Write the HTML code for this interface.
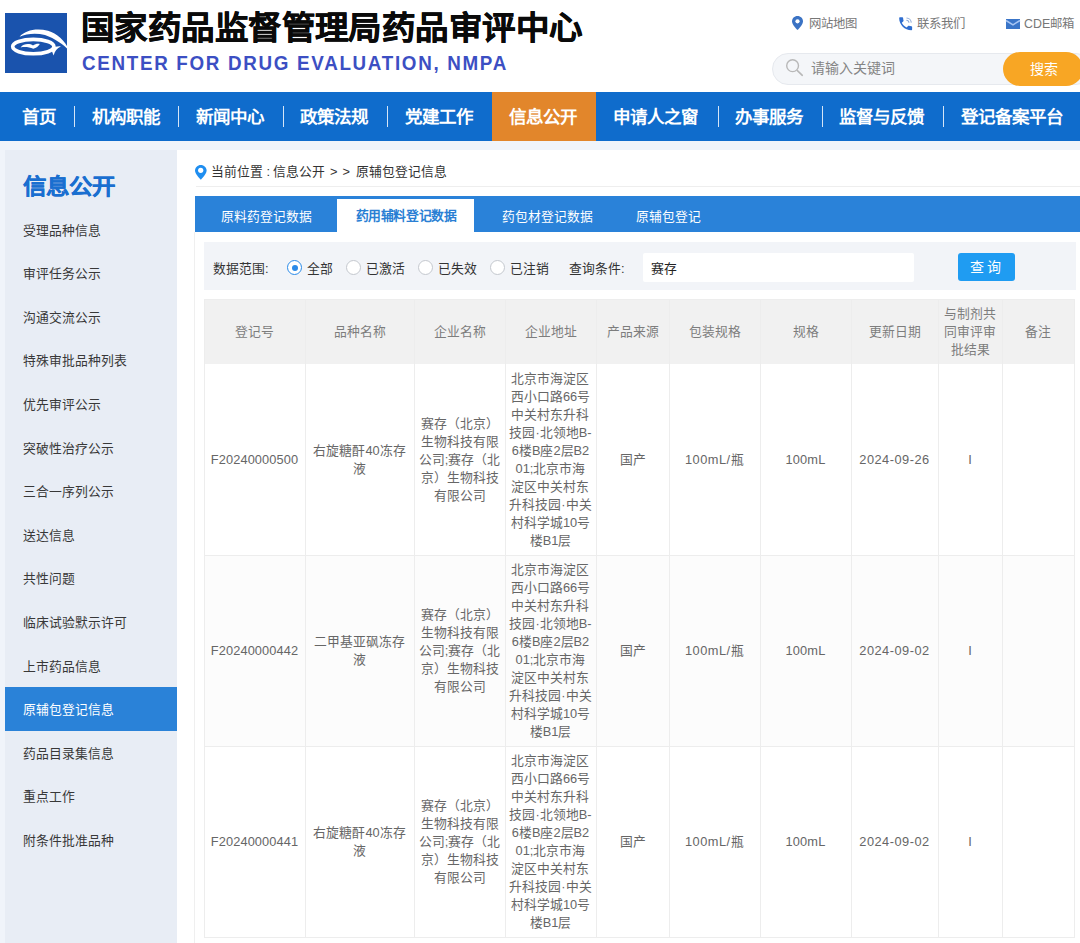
<!DOCTYPE html>
<html lang="zh-CN">
<head>
<meta charset="utf-8">
<style>
*{margin:0;padding:0;box-sizing:border-box}
html,body{width:1080px;height:943px;overflow:hidden}
body{font-family:"Liberation Sans",sans-serif;background:#f0f4fa;position:relative;color:#333}
#hdr{position:absolute;left:0;top:0;width:1080px;height:92px;background:#fff}
#logo{position:absolute;left:5px;top:13px;width:61.5px;height:60px;background:#1a53ad}
#cn{position:absolute;left:81px;top:5px;font-size:33.5px;letter-spacing:0.43px;font-weight:bold;color:#0a0a0a;-webkit-text-stroke:0.6px #0a0a0a;transform:scaleY(0.955);transform-origin:0 37px;line-height:46px;white-space:nowrap}
#en{position:absolute;left:81.5px;top:52px;font-size:20px;color:#3c4fc3;line-height:22px;letter-spacing:1.8px;transform:scaleX(0.94);transform-origin:0 0;font-weight:bold;white-space:nowrap}
.tl{position:absolute;top:14.5px;font-size:12.4px;color:#777;line-height:18px;white-space:nowrap}
#search{position:absolute;left:772px;top:53px;width:320px;height:32px;border-radius:16px;background:#f4f6f9;border:1px solid #e6e9ee}
#sbtn{position:absolute;left:1003px;top:52px;width:80px;height:34px;border-radius:17px;background:#f8a624;color:#fff;font-size:14px;line-height:34px;padding-left:27px}
#ph{position:absolute;left:811px;top:59px;font-size:14px;color:#858585;line-height:18px;white-space:nowrap}
#nav{position:absolute;left:0;top:92px;width:1080px;height:49px;background:#0f6ccc}
.ni{position:absolute;top:1px;height:49px;line-height:49px;font-size:17.5px;font-weight:bold;color:#fff;white-space:nowrap}
.sep{position:absolute;top:14px;width:1px;height:21px;background:#d5e5f7}
#side{position:absolute;left:5px;top:150px;width:172px;height:793px;background:#e8edf5}
#stitle{position:absolute;left:18px;top:19.5px;font-size:23.5px;font-weight:bold;color:#1a6fd0;line-height:32px;white-space:nowrap;-webkit-text-stroke:0.3px #1a6fd0;transform:scaleY(0.93);transform-origin:0 26px}
.si{position:absolute;left:0;width:172px;height:43.6px;line-height:45.6px;padding-left:18px;font-size:12.8px;color:#383838;white-space:nowrap}
.si.act{background:#2a82d8;color:#fff}
#main{position:absolute;left:177px;top:150px;width:903px;height:793px;background:#fff}
.m{position:absolute;white-space:nowrap}
.ic{position:absolute;overflow:visible}
.crumb{top:163px;font-size:12.8px;line-height:18px;color:#333}
#cline{left:196px;top:186px;width:884px;height:1px;background:#eeeeee}
#tabs{left:195px;top:196px;width:885px;height:36px;background:#2a82d9}
#tact{left:337px;top:199px;width:137px;height:33px;background:#fff}
.tab{top:206.5px;font-size:12.8px;line-height:20px;color:#fff}
#tabbox{left:194px;top:232px;width:1px;height:711px;background:#efefef}
#filter{left:204px;top:242px;width:872px;height:48px;background:#f2f4f8}
.ft{top:259px;font-size:12.8px;line-height:20px;color:#333}
.rad{top:260px;width:15px;height:15px;border-radius:50%;border:1px solid #c4c8ce;background:#fff}
.rad.on{border-color:#2a8ae8}
.rad.on:after{content:"";position:absolute;left:3.5px;top:3.5px;width:6px;height:6px;border-radius:50%;background:#2a8ae8}
#inp{left:643px;top:253px;width:271px;height:29px;background:#fff;border-radius:2px}
#qbtn{left:958px;top:253px;width:57px;height:28px;background:#1f9cf2;border-radius:3px;color:#fff;font-size:14px;line-height:28px;text-align:center;letter-spacing:3px;padding-left:0px}
.tb{position:absolute}
.vl{position:absolute;width:1px;background:#ededed}
.hl{position:absolute;height:1px;background:#ededed}
.cell{position:absolute;display:flex;align-items:center;justify-content:center;text-align:center;font-size:12.8px;line-height:18px}
.th{color:#7d7d7d}
.td{color:#666}
</style>
</head>
<body>
<div id="hdr">
  <div id="logo"><svg width="62" height="60" viewBox="0 0 62 60" style="position:absolute;left:0;top:0;overflow:visible">
<path d="M14.6,23.7 C20,17.5 31,14.8 43,17.8 C52,20.5 59.5,27 64.8,38.2 C58.5,31.5 50,25.5 40,22 C31,19.6 21.5,20.6 14.6,23.7 Z" fill="#fff"/>
<ellipse cx="28.3" cy="33.6" rx="20.6" ry="7.2" fill="none" stroke="#fff" stroke-width="3.6"/>
<path d="M45.5,36 C49,33.8 52.5,33.2 55.8,33.4 C52,35 49.8,37.8 48.6,42.6 C47.8,40 46.8,37.8 45.5,36 Z" fill="#fff"/>
<path d="M15.6,34.4 C18.5,30.4 24.5,30.2 28,32.4 C30,31 32.6,30.4 34.8,30.9 C33.6,33 31.2,34.9 28.3,35.8 C24.5,34 19.5,33.6 15.6,34.4 Z" fill="#fff"/>
</svg></div>
  <div id="cn">国家药品监督管理局药品审评中心</div>
  <div id="en">CENTER FOR DRUG EVALUATION, NMPA</div>
  <div class="tl" style="left:809px">网站地图</div>
  <div class="tl" style="left:917px">联系我们</div>
  <div class="tl" style="left:1024px">CDE邮箱</div>
  <div id="search"></div>
  <svg class="ic" style="left:792px;top:16px" width="11" height="14" viewBox="0 0 11 14"><path d="M5.5,0 C2.4,0 0,2.4 0,5.4 C0,8.8 5.5,14 5.5,14 C5.5,14 11,8.8 11,5.4 C11,2.4 8.6,0 5.5,0 Z" fill="#3b73c4"/><circle cx="5.5" cy="5.3" r="2.1" fill="#fff"/></svg>
  <svg class="ic" style="left:897px;top:14.5px" width="17.3" height="17.3" viewBox="0 0 24 24"><path d="M6.62 10.79c1.44 2.830 3.76 5.140 6.59 6.590l2.2-2.2c.27-.27.67-.36 1.02-.24 1.12.37 2.330.57 3.570.57.55 0 1 .45 1 1V20c0 .55-.45 1-1 1-9.39 0-17-7.61-17-17 0-.55.45-1 1-1h3.5c.55 0 1 .45 1 1 0 1.25.2 2.450.57 3.570.11.35.03.74-.25 1.020l-2.2 2.2z" fill="#2f6ed0"/><path d="M13.2,4.2 A6.8,6.8 0 0 1 19.8,10.6" fill="none" stroke="#8eaad8" stroke-width="1.5"/><path d="M13,7.4 A3.6,3.6 0 0 1 16.6,10.8" fill="none" stroke="#8eaad8" stroke-width="1.5"/></svg>
  <svg class="ic" style="left:1006px;top:19px" width="14" height="10" viewBox="0 0 14 10"><rect x="0" y="0" width="14" height="10" fill="#3a75c8"/><path d="M0,1.5 L7,5.8 L14,1.5" fill="none" stroke="#a8c6f4" stroke-width="1.5"/></svg>
  <svg class="ic" style="left:785px;top:58px" width="20" height="20" viewBox="0 0 20 20"><circle cx="7.6" cy="7.7" r="5.9" fill="none" stroke="#b8b8b8" stroke-width="1.4"/><path d="M12.4,12.6 L17.3,17.3" stroke="#b8b8b8" stroke-width="1.6" stroke-linecap="round"/></svg>
  <div id="ph">请输入关键词</div>
  <div id="sbtn">搜索</div>
</div>
<div id="nav">
  <div class="ni" style="left:22px">首页</div><div class="sep" style="left:74px"></div>
  <div class="ni" style="left:92px">机构职能</div><div class="sep" style="left:178px"></div>
  <div class="ni" style="left:196px">新闻中心</div><div class="sep" style="left:283px"></div>
  <div class="ni" style="left:300px">政策法规</div><div class="sep" style="left:387px"></div>
  <div class="ni" style="left:405px">党建工作</div>
  <div style="position:absolute;left:492px;top:0;width:104px;height:49px;background:#e2862b"></div>
  <div class="ni" style="left:509px">信息公开</div>
  <div class="ni" style="left:613px">申请人之窗</div><div class="sep" style="left:718px"></div>
  <div class="ni" style="left:735px">办事服务</div><div class="sep" style="left:822px"></div>
  <div class="ni" style="left:839px">监督与反馈</div><div class="sep" style="left:943px"></div>
  <div class="ni" style="left:961px">登记备案平台</div>
</div>
<div id="side">
  <div id="stitle">信息公开</div>
  <div class="si" style="top:57.5px">受理品种信息</div>
  <div class="si" style="top:101.1px">审评任务公示</div>
  <div class="si" style="top:144.7px">沟通交流公示</div>
  <div class="si" style="top:188.3px">特殊审批品种列表</div>
  <div class="si" style="top:231.9px">优先审评公示</div>
  <div class="si" style="top:275.5px">突破性治疗公示</div>
  <div class="si" style="top:319.1px">三合一序列公示</div>
  <div class="si" style="top:362.7px">送达信息</div>
  <div class="si" style="top:406.3px">共性问题</div>
  <div class="si" style="top:449.9px">临床试验默示许可</div>
  <div class="si" style="top:493.5px">上市药品信息</div>
  <div class="si act" style="top:537.1px">原辅包登记信息</div>
  <div class="si" style="top:580.7px">药品目录集信息</div>
  <div class="si" style="top:624.3px">重点工作</div>
  <div class="si" style="top:667.9px">附条件批准品种</div>
</div>
<div id="main"></div>
<svg class="ic" style="left:195px;top:165px" width="12" height="15" viewBox="0 0 12 15"><path d="M5.8,0 C2.6,0 0,2.5 0,5.6 C0,9.3 5.8,14.8 5.8,14.8 C5.8,14.8 11.6,9.3 11.6,5.6 C11.6,2.5 9,0 5.8,0 Z" fill="#1f8ef0"/><circle cx="5.7" cy="5.3" r="2.6" fill="#fff"/></svg>
<div class="m crumb" style="left:211px">当前位置 :</div><div class="m crumb" style="left:272.5px">信息公开</div><div class="m crumb" style="left:330px">&gt;</div><div class="m crumb" style="left:342.5px">&gt;</div><div class="m crumb" style="left:356px">原辅包登记信息</div>
<div class="m" id="cline"></div>
<div class="m" id="tabs"></div>
<div class="m" id="tact"></div>
<div class="m tab" style="left:221px">原料药登记数据</div>
<div class="m tab" style="left:355.5px;top:205.5px;font-size:12.8px;letter-spacing:-0.35px;color:#2a7fd4;font-weight:bold">药用辅料登记数据</div>
<div class="m tab" style="left:502px">药包材登记数据</div>
<div class="m tab" style="left:636px">原辅包登记</div>
<div class="m" id="tabbox"></div>
<div class="m" id="filter"></div>
<div class="m ft" style="left:213px">数据范围:</div>
<div class="m rad on" style="left:287px"></div><div class="m ft" style="left:307px">全部</div>
<div class="m rad" style="left:346px"></div><div class="m ft" style="left:366px">已激活</div>
<div class="m rad" style="left:418px"></div><div class="m ft" style="left:438px">已失效</div>
<div class="m rad" style="left:490px"></div><div class="m ft" style="left:510px">已注销</div>
<div class="m ft" style="left:569px">查询条件:</div>
<div class="m" id="inp"></div>
<div class="m ft" style="left:651px;color:#222">赛存</div>
<div class="m" id="qbtn">查询</div>
<div class="tb" style="left:204px;top:299px;width:870px;height:65px;background:#f1f1f1"></div>
<div class="tb" style="left:204px;top:364px;width:870px;height:191px;background:#ffffff"></div>
<div class="tb" style="left:204px;top:555px;width:870px;height:191px;background:#fcfcfc"></div>
<div class="tb" style="left:204px;top:746px;width:870px;height:191px;background:#ffffff"></div>
<div class="vl" style="left:204px;top:299px;height:639px"></div>
<div class="vl" style="left:305px;top:299px;height:639px"></div>
<div class="vl" style="left:414px;top:299px;height:639px"></div>
<div class="vl" style="left:505px;top:299px;height:639px"></div>
<div class="vl" style="left:596px;top:299px;height:639px"></div>
<div class="vl" style="left:669px;top:299px;height:639px"></div>
<div class="vl" style="left:760px;top:299px;height:639px"></div>
<div class="vl" style="left:851px;top:299px;height:639px"></div>
<div class="vl" style="left:938px;top:299px;height:639px"></div>
<div class="vl" style="left:1002px;top:299px;height:639px"></div>
<div class="vl" style="left:1074px;top:299px;height:639px"></div>
<div class="hl" style="left:204px;top:299px;width:871px"></div>
<div class="hl" style="left:204px;top:555px;width:871px"></div>
<div class="hl" style="left:204px;top:746px;width:871px"></div>
<div class="hl" style="left:204px;top:937px;width:871px"></div>
<div class="cell th" style="left:204px;top:299px;width:101px;height:65px"><span>登记号</span></div>
<div class="cell th" style="left:305px;top:299px;width:109px;height:65px"><span>品种名称</span></div>
<div class="cell th" style="left:414px;top:299px;width:91px;height:65px"><span>企业名称</span></div>
<div class="cell th" style="left:505px;top:299px;width:91px;height:65px"><span>企业地址</span></div>
<div class="cell th" style="left:596px;top:299px;width:73px;height:65px"><span>产品来源</span></div>
<div class="cell th" style="left:669px;top:299px;width:91px;height:65px"><span>包装规格</span></div>
<div class="cell th" style="left:760px;top:299px;width:91px;height:65px"><span>规格</span></div>
<div class="cell th" style="left:851px;top:299px;width:87px;height:65px"><span>更新日期</span></div>
<div class="cell th" style="left:938px;top:299px;width:64px;height:65px"><span>与制剂共<br>同审评审<br>批结果</span></div>
<div class="cell th" style="left:1002px;top:299px;width:72px;height:65px"><span>备注</span></div>
<div class="cell td" style="left:204px;top:364px;width:101px;height:191px;letter-spacing:0.1px"><span>F20240000500</span></div>
<div class="cell td" style="left:305px;top:364px;width:109px;height:191px;letter-spacing:0"><span>右旋糖酐40冻存<br>液</span></div>
<div class="cell td" style="left:414px;top:364px;width:91px;height:191px;letter-spacing:0"><span>赛存（北京）<br>生物科技有限<br>公司;赛存（北<br>京）生物科技<br>有限公司</span></div>
<div class="cell td" style="left:505px;top:364px;width:91px;height:191px;letter-spacing:0"><span>北京市海淀区<br>西小口路66号<br>中关村东升科<br>技园·北领地B-<br>6楼B座2层B2<br>01;北京市海<br>淀区中关村东<br>升科技园·中关<br>村科学城10号<br>楼B1层</span></div>
<div class="cell td" style="left:596px;top:364px;width:73px;height:191px;letter-spacing:0"><span>国产</span></div>
<div class="cell td" style="left:669px;top:364px;width:91px;height:191px;letter-spacing:0.5px"><span>100mL/瓶</span></div>
<div class="cell td" style="left:760px;top:364px;width:91px;height:191px;letter-spacing:0.2px"><span>100mL</span></div>
<div class="cell td" style="left:851px;top:364px;width:87px;height:191px;letter-spacing:0.5px"><span>2024-09-26</span></div>
<div class="cell td" style="left:938px;top:364px;width:64px;height:191px;letter-spacing:0"><span>I</span></div>
<div class="cell td" style="left:204px;top:555px;width:101px;height:191px;letter-spacing:0.1px"><span>F20240000442</span></div>
<div class="cell td" style="left:305px;top:555px;width:109px;height:191px;letter-spacing:0"><span>二甲基亚砜冻存<br>液</span></div>
<div class="cell td" style="left:414px;top:555px;width:91px;height:191px;letter-spacing:0"><span>赛存（北京）<br>生物科技有限<br>公司;赛存（北<br>京）生物科技<br>有限公司</span></div>
<div class="cell td" style="left:505px;top:555px;width:91px;height:191px;letter-spacing:0"><span>北京市海淀区<br>西小口路66号<br>中关村东升科<br>技园·北领地B-<br>6楼B座2层B2<br>01;北京市海<br>淀区中关村东<br>升科技园·中关<br>村科学城10号<br>楼B1层</span></div>
<div class="cell td" style="left:596px;top:555px;width:73px;height:191px;letter-spacing:0"><span>国产</span></div>
<div class="cell td" style="left:669px;top:555px;width:91px;height:191px;letter-spacing:0.5px"><span>100mL/瓶</span></div>
<div class="cell td" style="left:760px;top:555px;width:91px;height:191px;letter-spacing:0.2px"><span>100mL</span></div>
<div class="cell td" style="left:851px;top:555px;width:87px;height:191px;letter-spacing:0.5px"><span>2024-09-02</span></div>
<div class="cell td" style="left:938px;top:555px;width:64px;height:191px;letter-spacing:0"><span>I</span></div>
<div class="cell td" style="left:204px;top:746px;width:101px;height:191px;letter-spacing:0.1px"><span>F20240000441</span></div>
<div class="cell td" style="left:305px;top:746px;width:109px;height:191px;letter-spacing:0"><span>右旋糖酐40冻存<br>液</span></div>
<div class="cell td" style="left:414px;top:746px;width:91px;height:191px;letter-spacing:0"><span>赛存（北京）<br>生物科技有限<br>公司;赛存（北<br>京）生物科技<br>有限公司</span></div>
<div class="cell td" style="left:505px;top:746px;width:91px;height:191px;letter-spacing:0"><span>北京市海淀区<br>西小口路66号<br>中关村东升科<br>技园·北领地B-<br>6楼B座2层B2<br>01;北京市海<br>淀区中关村东<br>升科技园·中关<br>村科学城10号<br>楼B1层</span></div>
<div class="cell td" style="left:596px;top:746px;width:73px;height:191px;letter-spacing:0"><span>国产</span></div>
<div class="cell td" style="left:669px;top:746px;width:91px;height:191px;letter-spacing:0.5px"><span>100mL/瓶</span></div>
<div class="cell td" style="left:760px;top:746px;width:91px;height:191px;letter-spacing:0.2px"><span>100mL</span></div>
<div class="cell td" style="left:851px;top:746px;width:87px;height:191px;letter-spacing:0.5px"><span>2024-09-02</span></div>
<div class="cell td" style="left:938px;top:746px;width:64px;height:191px;letter-spacing:0"><span>I</span></div></body></html>
